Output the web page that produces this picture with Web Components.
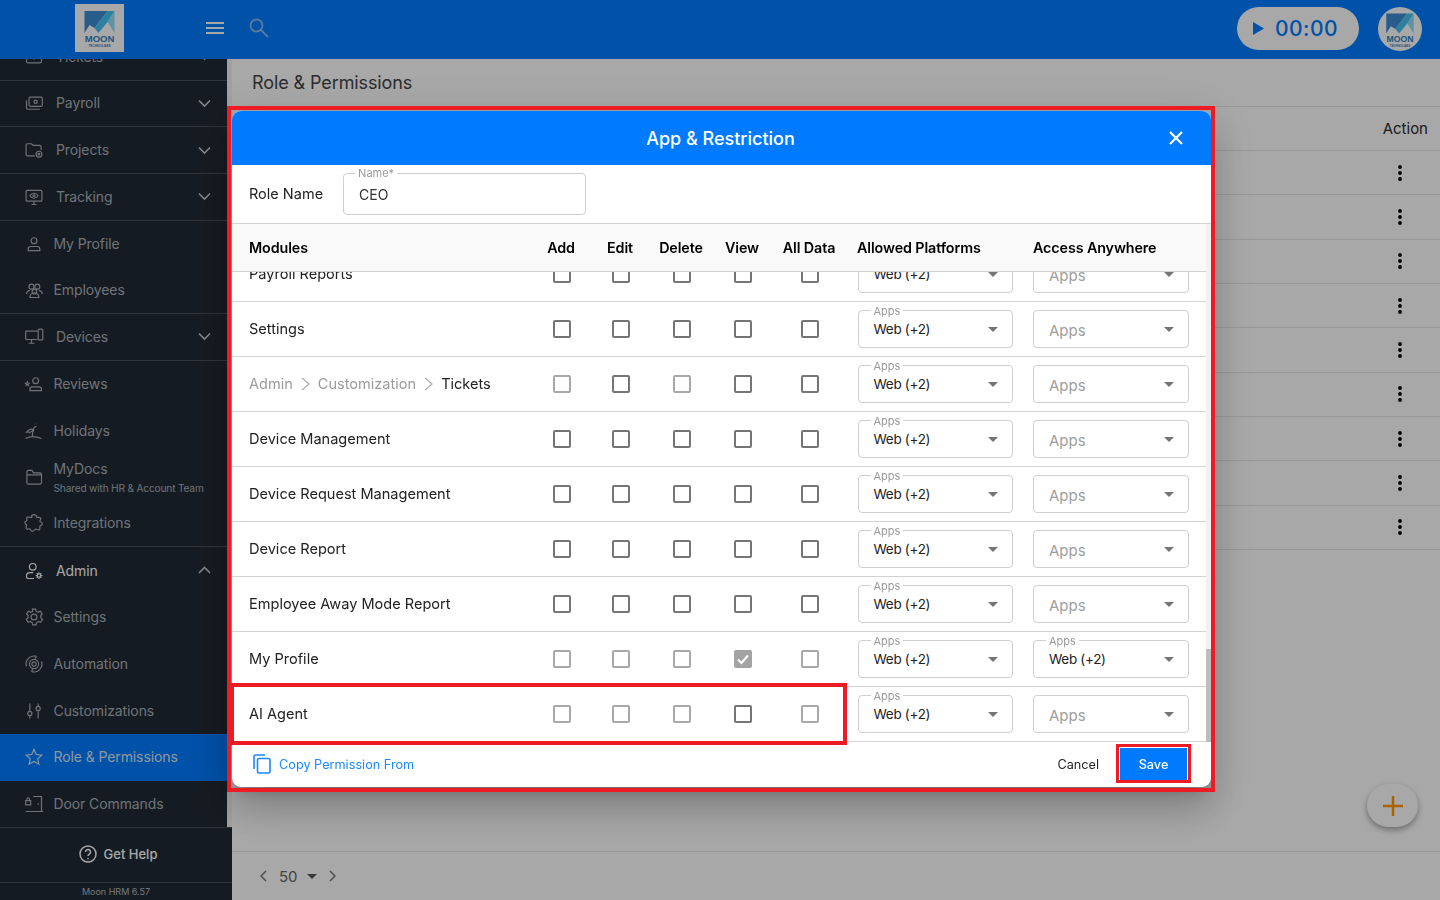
<!DOCTYPE html>
<html lang="en">
<head>
<meta charset="utf-8">
<title>Role & Permissions</title>
<style>
  html, body { margin: 0; height: 100%; overflow: hidden; }
  body { font-family: Inter, "Noto Sans", "Liberation Sans", sans-serif; color: #222; background: #fff; }
</style>
</head>
<body>
<app-shell>
  <top-bar slot="top"></top-bar>

  <side-nav slot="side">
    <nav-item label="Tickets" line chevron="down"><svg viewBox="0 0 24 24"><rect x="3" y="5" width="18" height="14" rx="2"/><path d="M12 9v6M9 12h6"/></svg></nav-item>
    <nav-item label="Payroll" line chevron="down"><svg viewBox="0 0 24 24"><rect x="6" y="5" width="16" height="11" rx="1.5"/><circle cx="14" cy="10.5" r="2"/><path d="M3 9v9a1.5 1.5 0 0 0 1.5 1.500H19"/></svg></nav-item>
    <nav-item label="Projects" line chevron="down"><svg viewBox="0 0 24 24"><path d="M13 19H4a1.500 1.500 0 0 1-1.500-1.500V6A1.500 1.500 0 0 1 4 4.500h5l2 2h8A1.500 1.500 0 0 1 20.500 8v4"/><circle cx="18" cy="17" r="3.500"/><circle cx="18" cy="17" r="1"/></svg></nav-item>
    <nav-item label="Tracking" line chevron="down"><svg viewBox="0 0 24 24"><rect x="2.500" y="4" width="19" height="13" rx="1.500"/><path d="M9 21h6M12 17v4M7 10.500s2-3 5-3 5 3 5 3-2 3-5 3-5-3-5-3z"/><circle cx="12" cy="10.500" r="1.200"/></svg></nav-item>
    <nav-item label="My Profile" child><svg viewBox="0 0 24 24"><circle cx="12" cy="8" r="3.500"/><path d="M5 20v-2a3 3 0 0 1 3-3h8a3 3 0 0 1 3 3v2z"/></svg></nav-item>
    <nav-item label="Employees" child line><svg viewBox="0 0 24 24"><circle cx="9" cy="8" r="3"/><circle cx="16" cy="8" r="3"/><circle cx="12.500" cy="14" r="2.800"/><path d="M7 21a5.500 5.500 0 0 1 11 0zM3 17a5 5 0 0 1 4-4.500M22 17a5 5 0 0 0-4-4.500"/></svg></nav-item>
    <nav-item label="Devices" line chevron="down"><svg viewBox="0 0 24 24"><path d="M16 15H3a1 1 0 0 1-1-1V6a1 1 0 0 1 1-1h13M9 15v4M5.500 19.500h7"/><rect x="17" y="2.500" width="5.500" height="13" rx="1.200"/></svg></nav-item>
    <nav-item label="Reviews" child><svg viewBox="0 0 24 24"><circle cx="14" cy="8" r="3.500"/><path d="M7 20v-1.500a3 3 0 0 1 3-3h8a3 3 0 0 1 3 3V20zM4 9.500l.7 1.400 1.500.2-1.100 1 .3 1.500-1.400-.7-1.400.7.3-1.500-1.100-1 1.500-.2z"/></svg></nav-item>
    <nav-item label="Holidays" child><svg viewBox="0 0 24 24"><path d="M2 21c4-2.500 12-2.500 19 0M10 18.500c0-3 .5-6 1.500-8M11.500 10.500C9 9 5 10 3 13.500c2-.5 3.500-.5 4 .5 1-1.500 2-2 3-1.500 0-1 .5-2 1.500-2.500zM11.500 10.500c0-2 1.500-4 3.500-4"/><path d="M17 4.500v.1M20 6v.1M18 8v.1M21 3v.1M15 2.500v.1"/></svg></nav-item>
    <nav-item label="MyDocs" sub="Shared with HR &amp; Account Team" child><svg viewBox="0 0 24 24"><path d="M3.500 7V5.500A1.500 1.500 0 0 1 5 4h4.500l2 3h8A1.500 1.500 0 0 1 21 8.500V19a1.500 1.500 0 0 1-1.500 1.500H5A1.500 1.500 0 0 1 3.500 19zM3.500 9.500H21"/></svg></nav-item>
    <nav-item label="Integrations" child line><svg viewBox="0 0 24 24"><path d="M9 5a3 3 0 0 1 6 0c0 .8 4-.5 5 1s-1.500 3-1 4 3 1 3 3-2.500 2-3 3 1 3-.5 4-3.500-1-5-.5-1.500 2.500-3.500 2.500-2-3-3.500-3-3.500 1-4-.5 1-3 .5-4-2-1.500-2-3 2.500-1.500 2.500-3 -1-3 .5-3.500 5.500 1 5.500 0z"/></svg></nav-item>
    <nav-item label="Admin" bright chevron="up"><svg viewBox="0 0 24 24"><circle cx="10.500" cy="7" r="4"/><path d="M11 14H7a4 4 0 0 0-4 4v1a2 2 0 0 0 2 2h7"/><circle cx="18" cy="17.500" r="2"/><path d="M18 13.500v1.500M18 20v1.500M14 17.500h1.500M20.500 17.500H22M15.200 14.700l1.100 1.100M19.700 19.200l1.100 1.100M15.200 20.300l1.100-1.100M19.700 15.800l1.100-1.100"/></svg></nav-item>
    <nav-item label="Settings" child><svg viewBox="0 0 24 24"><circle cx="12" cy="12" r="3.500"/><path d="M10 2.500h4l.6 2.800 2.500 1.100 2.400-1.500 2.500 3.400-2 2 .3 2.800 2 1.700-2.300 3.500-2.600-1-2.300 1.600-.6 2.600h-4l-.6-2.600-2.300-1.600-2.600 1-2.300-3.500 2-1.700.3-2.800-2-2 2.500-3.400 2.400 1.500 2.500-1.100z"/></svg></nav-item>
    <nav-item label="Automation" child><svg viewBox="0 0 24 24"><circle cx="12" cy="12" r="2.500"/><circle cx="12" cy="12" r="5.500"/><path d="M3 15A9.500 9.500 0 0 1 15 3M21 9a9.500 9.500 0 0 1-12 12M15 3l-2.500-1M15 3l-1.500 2.500M9 21l2.500 1M9 21l1.500-2.500"/></svg></nav-item>
    <nav-item label="Customizations" child><svg viewBox="0 0 24 24"><path d="M7 3v9M7 18v3M17 3v3M17 12v9"/><circle cx="7" cy="15" r="2.500"/><circle cx="17" cy="9" r="2.500"/></svg></nav-item>
    <nav-item label="Role &amp; Permissions" child active><svg viewBox="0 0 24 24"><path d="M12 3l2.800 6 6.500.8-4.800 4.400 1.300 6.400L12 17.400l-5.800 3.200 1.300-6.400-4.800-4.400 6.500-.8z"/></svg></nav-item>
    <nav-item label="Door Commands" child><svg viewBox="0 0 24 24"><path d="M11 3h10v18H9M21 21h2M9 21H2M17 11v2"/><path d="M2 8h6v5H2zM3.500 8V6a1.500 1.500 0 0 1 3 0v2" /></svg></nav-item>
  </side-nav>

  <main-pane slot="main" page-title="Role &amp; Permissions"></main-pane>
</app-shell>

<role-modal>
  <perm-row checks="ddddd" platforms="web" anywhere="none" nolegend><span>Payroll Reports</span></perm-row>
  <perm-row checks="ddddd" platforms="web" anywhere="none"><span>Settings</span></perm-row>
  <perm-row checks="ldldd" platforms="web" anywhere="none"><crumb-path path="Admin|Customization">Tickets</crumb-path></perm-row>
  <perm-row checks="ddddd" platforms="web" anywhere="none"><span>Device Management</span></perm-row>
  <perm-row checks="ddddd" platforms="web" anywhere="none"><span>Device Request Management</span></perm-row>
  <perm-row checks="ddddd" platforms="web" anywhere="none"><span>Device Report</span></perm-row>
  <perm-row checks="ddddd" platforms="web" anywhere="none"><span>Employee Away Mode Report</span></perm-row>
  <perm-row checks="lllcl" platforms="web" anywhere="web"><span>My Profile</span></perm-row>
  <perm-row checks="llldl" platforms="web" anywhere="none"><span>AI Agent</span></perm-row>
</role-modal>

<mark-box style="left:227px;top:106px;width:988px;height:686px" thick="4.500"></mark-box>
<mark-box style="left:230px;top:683px;width:617px;height:62px" thick="4"></mark-box>
<mark-box style="left:1116px;top:744px;width:75px;height:39px" thick="3.500"></mark-box>

<script>
class MoonLogo extends HTMLElement {
  constructor() {
    super();
    this.attachShadow({mode: 'open'});
    this.shadowRoot.innerHTML = `
      <style>
        :host { display: block; background: #fff; }
        svg { display: block; width: 100%; height: 100%; }
        text { font-family: "Liberation Sans", sans-serif; text-anchor: middle; fill: #2f82c0; font-weight: 700; }
      </style>
      <svg viewBox="0 0 48 48">
        <polygon points="9,7 32,7 19,24 14,21 9,29" fill="#3c8cd4"/>
        <polygon points="32,7 39,7 32,18 23,29 19,24" fill="#46c2f5"/>
        <polygon points="39,7 39,29 32,18" fill="#8ee0fb"/>
        <text x="24" y="38" font-size="9.500">MOON</text>
        <text x="24" y="43.300" font-size="3.200">TECHNOLABS</text>
      </svg>
    `;
  }
}
customElements.define('moon-logo', MoonLogo);

class TopBar extends HTMLElement {
  constructor() {
    super();
    this.attachShadow({mode: 'open'});
    this.shadowRoot.innerHTML = `
      <style>
        :host {
          display: flex;
          align-items: center;
          grid-column: 1 / -1;
          background: #007bff;
          padding: 0 18px 0 75px;
          position: relative;
          z-index: 2;
        }
        moon-logo { width: 49px; height: 48px; margin-top: -3px; }
        .menu { width: 18px; height: 12px; margin: -3px 0 0 82px; color: #fff; }
        .search { width: 20px; height: 20px; margin: -4px 0 0 25px; color: #8ab8ec; }
        svg { display: block; }
        .timer {
          margin-left: auto;
          margin-top: -2px;
          width: 122px;
          height: 43px;
          border-radius: 22px;
          background: #fff;
          color: #007bff;
          display: flex;
          align-items: center;
          padding-left: 16px;
          box-sizing: border-box;
          font-size: 21px;
          font-weight: 500;
          letter-spacing: .5px;
        }
        .timer svg { width: 11px; height: 13px; margin-right: 11px; }
        .avatar {
          width: 44px;
          height: 44px;
          margin-left: 19px;
          margin-top: -2px;
          border-radius: 50%;
          overflow: hidden;
          background: #fff;
        }
      </style>
      <moon-logo></moon-logo>
      <svg class="menu" viewBox="0 0 18 12" fill="none" stroke="currentColor" stroke-width="2"><path d="M0 1h18M0 6h18M0 11h18"/></svg>
      <svg class="search" viewBox="0 0 20 20" fill="none" stroke="currentColor" stroke-width="1.800"><circle cx="7.500" cy="7.500" r="6"/><path d="M12 12l7 7"/></svg>
      <div class="timer"><svg viewBox="0 0 11 13"><polygon points="0,0 11,6.500 0,13" fill="currentColor"/></svg>00:00</div>
      <div class="avatar"><moon-logo></moon-logo></div>
    `;
    const inner = this.shadowRoot.querySelector('.avatar moon-logo');
    inner.style.cssText = 'width:44px;height:44px;margin:0';
  }
}
customElements.define('top-bar', TopBar);

class NavItem extends HTMLElement {
  constructor() {
    super();
    this.attachShadow({mode: 'open'});
  }

  connectedCallback() {
    const sub = this.getAttribute('sub');
    const chevron = this.getAttribute('chevron');
    const path = chevron === 'up' ? 'M1 7l5.500-5.500L12 7' : 'M1 1.500L6.500 7 12 1.500';
    this.shadowRoot.innerHTML = `
      <style>
        :host {
          display: flex;
          align-items: center;
          flex: none;
          height: 46.670px;
          box-sizing: border-box;
          padding: 0 16px 0 24px;
          color: #a9b0b7;
          font-size: 14px;
          letter-spacing: -.1px;
        }
        :host([line]) { border-bottom: 1px solid #47505a; }
        :host([bright]) { color: #fff; }
        :host([active]) { background: #007bff; color: #dbe6f2; }
        ::slotted(svg) {
          width: 20px;
          height: 20px;
          flex: none;
          fill: none;
          stroke: currentColor;
          stroke-width: 1.400;
        }
        .text { margin-left: 12px; line-height: 1; }
        :host([child]) .text { margin-left: 9.500px; }
        .sub { font-size: 10.200px; margin-top: 7px; letter-spacing: -.2px; }
        .main { white-space: nowrap; }
        .chev { margin-left: auto; width: 13px; height: 9px; fill: none; stroke: #c6ccd2; stroke-width: 1.600; }
      </style>
      <slot></slot>
      <div class="text">
        <div class="main">${this.getAttribute('label')}</div>
        ${sub ? `<div class="sub">${sub}</div>` : ''}
      </div>
      ${chevron ? `<svg class="chev" viewBox="0 0 13 9"><path d="${path}"/></svg>` : ''}
    `;
  }
}
customElements.define('nav-item', NavItem);

class SideNav extends HTMLElement {
  constructor() {
    super();
    this.attachShadow({mode: 'open'});
    this.shadowRoot.innerHTML = `
      <style>
        :host {
          display: flex;
          flex-direction: column;
          min-height: 0;
          background: #212a34;
          color: #fff;
        }
        .scroll {
          flex: 1;
          min-height: 0;
          overflow: hidden;
          border-right: 5px solid #f4f4f4;
        }
        .list { display: flex; flex-direction: column; margin-top: -25px; }
        .help {
          flex: none;
          height: 55px;
          box-sizing: border-box;
          border-top: 1px solid #47505a;
          display: flex;
          align-items: center;
          justify-content: center;
          gap: 7px;
          font-size: 13px;
          font-weight: 500;
          padding: 0 0 2px 4px;
        }
        .help svg { width: 18px; height: 18px; fill: none; stroke: currentColor; stroke-width: 1.500; }
        .version {
          flex: none;
          height: 18px;
          box-sizing: border-box;
          border-top: 1px solid #47505a;
          text-align: center;
          font-size: 9px;
          line-height: 17px;
          color: #b4bac0;
        }
      </style>
      <div class="scroll"><div class="list"><slot></slot></div></div>
      <div class="help">
        <svg viewBox="0 0 18 18"><circle cx="9" cy="9" r="8"/><path d="M6.500 7a2.500 2.500 0 1 1 3.800 2.100c-.9.600-1.300 1-1.300 2"/><path d="M9 13v1.300"/></svg>
        Get Help
      </div>
      <div class="version">Moon HRM 6.57</div>
    `;
  }
}
customElements.define('side-nav', SideNav);

class MainPane extends HTMLElement {
  constructor() {
    super();
    this.attachShadow({mode: 'open'});
  }

  connectedCallback() {
    const dots = '<svg width="4" height="16" viewBox="0 0 4 16"><circle cx="2" cy="2" r="1.900"/><circle cx="2" cy="8" r="1.900"/><circle cx="2" cy="14" r="1.900"/></svg>';
    const rows = Array(9).fill(`<div class="row">${dots}</div>`).join('');
    this.shadowRoot.innerHTML = `
      <style>
        :host {
          display: flex;
          flex-direction: column;
          min-height: 0;
          position: relative;
          background: #fff;
        }
        .title {
          flex: none;
          height: 48px;
          box-sizing: border-box;
          border-bottom: 1px solid #e6e6e6;
          padding: 0 0 1px 20px;
          display: flex;
          align-items: center;
          font-size: 18px;
          letter-spacing: -.1px;
          color: #444;
        }
        .head {
          flex: none;
          height: 44px;
          box-sizing: border-box;
          display: flex;
          align-items: center;
          justify-content: flex-end;
          padding-right: 12px;
          border-bottom: 1px solid #e6e6e6;
          font-size: 15px;
          color: #2c2c2c;
        }
        .row {
          flex: none;
          height: 44.350px;
          box-sizing: border-box;
          display: flex;
          align-items: center;
          justify-content: flex-end;
          padding-right: 38px;
          border-bottom: 1px solid #e6e6e6;
        }
        .foot {
          margin-top: auto;
          flex: none;
          height: 49px;
          box-sizing: border-box;
          border-top: 1px solid #e6e6e6;
          display: flex;
          align-items: center;
          padding-left: 28px;
          gap: 9px;
          font-size: 15px;
          color: #666;
        }
        .foot svg { fill: none; stroke: #777; stroke-width: 1.500; }
        .foot .caret { fill: #555; stroke: none; }
        .fab {
          position: absolute;
          right: 22px;
          bottom: 73px;
          width: 51px;
          height: 43px;
          border-radius: 22px;
          background: #fff;
          box-shadow: 0 3px 6px rgba(0,0,0,.35);
          display: flex;
          align-items: center;
          justify-content: center;
        }
      </style>
      <div class="title">${this.getAttribute('page-title')}</div>
      <div class="head">Action</div>
      ${rows}
      <div class="foot">
        <svg width="7" height="12" viewBox="0 0 7 12"><path d="M6 1L1 6l5 5"/></svg>
        <span style="margin-left:3px">50</span>
        <svg class="caret" width="10" height="5" viewBox="0 0 10 5"><polygon points="0,0 10,0 5,5"/></svg>
        <svg width="7" height="12" viewBox="0 0 7 12" style="margin-left:3px"><path d="M1 1l5 5-5 5"/></svg>
      </div>
      <div class="fab"><svg width="20" height="20" viewBox="0 0 20 20" fill="none" stroke="#ff9800" stroke-width="2.500"><path d="M10 0v20M0 10h20"/></svg></div>
    `;
  }
}
customElements.define('main-pane', MainPane);

class AppShell extends HTMLElement {
  constructor() {
    super();
    this.attachShadow({mode: 'open'});
    this.shadowRoot.innerHTML = `
      <style>
        :host {
          display: grid;
          grid-template-columns: 232px 1fr;
          grid-template-rows: 59px 1fr;
          height: 100vh;
          overflow: hidden;
        }
      </style>
      <slot name="top"></slot>
      <slot name="side"></slot>
      <slot name="main"></slot>
    `;
  }
}
customElements.define('app-shell', AppShell);

class PermCheck extends HTMLElement {
  constructor() {
    super();
    this.attachShadow({mode: 'open'});
    this.shadowRoot.innerHTML = `
      <style>
        :host {
          display: block;
          width: 18px;
          height: 18px;
          box-sizing: border-box;
          border: 2px solid #757575;
          border-radius: 2px;
          background: #fff;
        }
        :host([state="l"]) { border-color: #a8a8a8; }
        :host([state="c"]) { border-color: #a3a3a3; background: #a3a3a3; }
        svg { display: none; width: 14px; height: 14px; fill: none; stroke: #fff; stroke-width: 2.200; }
        :host([state="c"]) svg { display: block; }
      </style>
      <svg viewBox="0 0 14 14"><path d="M2 7.500l3.500 3.500L12 3.500"/></svg>
    `;
  }
}
customElements.define('perm-check', PermCheck);

class AppSelect extends HTMLElement {
  constructor() {
    super();
    this.attachShadow({mode: 'open'});
  }

  connectedCallback() {
    const filled = this.getAttribute('value');
    const legend = filled && !this.hasAttribute('nolegend');
    this.shadowRoot.innerHTML = `
      <style>
        :host {
          display: flex;
          align-items: center;
          position: relative;
          height: 38px;
          box-sizing: border-box;
          border: 1px solid #cfcfcf;
          border-radius: 4px;
          padding: 0 14px 0 15px;
          font-size: 13.500px;
          letter-spacing: -.3px;
          color: #222;
          background: #fff;
        }
        .label {
          position: absolute;
          left: 12px;
          top: -6px;
          padding: 0 3px;
          background: #fff;
          font-size: 11px;
          letter-spacing: 0;
          line-height: 12px;
          color: #9a9a9a;
        }
        .value { margin-top: -1px; }
        .empty { color: #9e9e9e; font-size: 15px; letter-spacing: 0; margin-top: 2px; }
        svg { margin-left: auto; margin-top: 1px; }
      </style>
      ${legend ? '<span class="label">Apps</span>' : ''}
      <span class="${filled ? 'value' : 'empty'}">${filled || 'Apps'}</span>
      <svg width="10" height="5" viewBox="0 0 10 5"><polygon points="0,0 10,0 5,5" fill="#757575"/></svg>
    `;
  }
}
customElements.define('app-select', AppSelect);

class CrumbPath extends HTMLElement {
  constructor() {
    super();
    this.attachShadow({mode: 'open'});
  }

  connectedCallback() {
    const sep = '<svg width="9" height="14" viewBox="0 0 9 14" fill="none" stroke="#ababab" stroke-width="1.200"><path d="M1 1l7 6-7 6"/></svg>';
    const parts = this.getAttribute('path').split('|').map(p => `<span class="dim">${p}</span>${sep}`).join('');
    this.shadowRoot.innerHTML = `
      <style>
        :host { display: inline-flex; align-items: center; gap: 8px; }
        .dim { color: #9c9c9c; }
      </style>
      ${parts}<slot></slot>
    `;
  }
}
customElements.define('crumb-path', CrumbPath);

const COLS = '300px 60px 58px 64px 58px 76px 175px 183px';

class PermRow extends HTMLElement {
  constructor() {
    super();
    this.attachShadow({mode: 'open'});
  }

  connectedCallback() {
    const checks = [...this.getAttribute('checks')]
      .map(s => `<div class="cell"><perm-check state="${s}"></perm-check></div>`).join('');
    const platforms = this.getAttribute('platforms') === 'web' ? 'Web (+2)' : '';
    const anywhere = this.getAttribute('anywhere') === 'web' ? 'Web (+2)' : '';
    const legend = this.hasAttribute('nolegend') ? 'nolegend' : '';
    this.shadowRoot.innerHTML = `
      <style>
        :host {
          display: grid;
          grid-template-columns: ${COLS};
          align-items: center;
          flex: none;
          height: 55px;
          box-sizing: border-box;
          border-bottom: 1px solid #d2d2d2;
          font-size: 14.550px;
          color: #222;
        }
        .name { padding: 0 0 1px 17px; white-space: nowrap; }
        .cell { display: flex; justify-content: center; }
        .sel { padding-left: 9.500px; padding-right: 10px; }
        .sel.last { padding-left: 10px; padding-right: 17px; }
      </style>
      <div class="name"><slot></slot></div>
      ${checks}
      <div class="sel"><app-select value="${platforms}" ${legend}></app-select></div>
      <div class="sel last"><app-select value="${anywhere}"></app-select></div>
    `;
  }
}
customElements.define('perm-row', PermRow);

class RoleModal extends HTMLElement {
  constructor() {
    super();
    this.attachShadow({mode: 'open'});
    this.shadowRoot.innerHTML = `
      <style>
        :host {
          position: fixed;
          inset: 0;
          z-index: 10;
          background: rgba(0,0,0,.34);
        }
        #dialog {
          position: absolute;
          left: 232px;
          top: 111px;
          width: 979px;
          height: 676px;
          display: flex;
          flex-direction: column;
          background: #fff;
          border-radius: 9px;
          overflow: hidden;
          box-shadow: 0 11px 15px -7px rgba(0,0,0,.2), 0 24px 38px 3px rgba(0,0,0,.14), 0 9px 46px 8px rgba(0,0,0,.12);
        }
        header {
          flex: none;
          height: 54px;
          padding-right: 2px;
          background: #007bff;
          color: #fff;
          display: flex;
          align-items: center;
          justify-content: center;
          position: relative;
          font-size: 18px;
          font-weight: 500;
        }
        #close { position: absolute; right: 28px; top: 20px; }
        .role {
          flex: none;
          height: 59px;
          box-sizing: border-box;
          border-bottom: 1px solid #d2d2d2;
          display: flex;
          align-items: center;
          padding: 0 0 0 17px;
          font-size: 14.500px;
        }
        .role b { font-weight: 400; margin-top: -2px; }
        .field {
          position: relative;
          width: 243px;
          height: 42px;
          box-sizing: border-box;
          margin-left: 20px;
          margin-top: -1px;
          border: 1px solid #cfcfcf;
          border-radius: 4px;
          padding: 2px 15px 0;
          display: flex;
          align-items: center;
          font-size: 14px;
          color: #333;
        }
        .field span {
          position: absolute;
          left: 11px;
          top: -7px;
          padding: 0 3px;
          background: #fff;
          font-size: 11px;
          line-height: 13px;
          color: #9a9a9a;
        }
        .table { flex: 1; min-height: 0; display: flex; }
        .grid { flex: 1; min-width: 0; display: flex; flex-direction: column; }
        .head {
          flex: none;
          height: 48px;
          box-sizing: border-box;
          display: grid;
          grid-template-columns: ${COLS};
          align-items: center;
          background: #f9f9f9;
          border-bottom: 1px solid #d2d2d2;
          font-size: 14.300px;
          letter-spacing: -.1px;
          font-weight: 600;
          color: #000;
          white-space: nowrap;
        }
        .head div:nth-child(n+2):nth-child(-n+6) { text-align: center; padding-right: 2px; }
        .head .left { padding-left: 17px; }
        .head .plat { padding-left: 9px; }
        .head .any { padding-left: 10px; }
        .body { flex: 1; min-height: 0; overflow: hidden; }
        .rows { display: flex; flex-direction: column; margin-top: -25px; }
        .track { flex: none; width: 5px; background: #f1f1f1; display: flex; flex-direction: column; }
        .thumb { margin-top: auto; height: 93px; background: #bdbdbd; }
        footer {
          flex: none;
          height: 45px;
          box-sizing: border-box;
          display: flex;
          align-items: center;
          padding: 0 24px 2px 21px;
          font-size: 12.700px;
        }
        .copy { display: flex; align-items: center; gap: 8px; color: #1a88ff; margin-top: 1px; }
        .copy svg { fill: none; stroke: #1a88ff; stroke-width: 1.600; }
        .cancel { margin-left: auto; margin-top: 1px; color: #222; }
        .save {
          margin-left: 21px;
          width: 67px;
          height: 32px;
          box-sizing: border-box;
          padding-top: 1px;
          background: #007bff;
          color: #fff;
          font-weight: 500;
          display: flex;
          align-items: center;
          justify-content: center;
        }
      </style>
      <div id="dialog">
        <header>
          App &amp; Restriction
          <svg id="close" width="14" height="14" viewBox="0 0 14 14" stroke="#fff" stroke-width="2.200"><path d="M1 1l12 12M13 1L1 13"/></svg>
        </header>
        <div class="role"><b>Role Name</b><div class="field"><span>Name*</span>CEO</div></div>
        <div class="table">
          <div class="grid">
            <div class="head">
              <div class="left">Modules</div><div>Add</div><div>Edit</div><div>Delete</div><div>View</div><div>All Data</div>
              <div class="plat">Allowed Platforms</div><div class="any">Access Anywhere</div>
            </div>
            <div class="body"><div class="rows"><slot></slot></div></div>
          </div>
          <div class="track"><div class="thumb"></div></div>
        </div>
        <footer>
          <div class="copy">
            <svg width="18" height="20" viewBox="0 0 18 20"><path d="M1 15V2.500A1.500 1.500 0 0 1 2.500 1H12"/><rect x="4.500" y="4.500" width="12.500" height="14.500" rx="1.500"/></svg>
            Copy Permission From
          </div>
          <div class="cancel">Cancel</div>
          <div class="save">Save</div>
        </footer>
      </div>
    `;
  }
}
customElements.define('role-modal', RoleModal);

// red call-out frames drawn over the screenshot
class MarkBox extends HTMLElement {
  constructor() {
    super();
    this.attachShadow({mode: 'open'});
  }

  connectedCallback() {
    this.shadowRoot.innerHTML = `
      <style>
        :host {
          position: fixed;
          z-index: 20;
          box-sizing: border-box;
          border: ${this.getAttribute('thick')}px solid #ed1c24;
          pointer-events: none;
        }
      </style>
    `;
  }
}
customElements.define('mark-box', MarkBox);
</script>
</body>
</html>
